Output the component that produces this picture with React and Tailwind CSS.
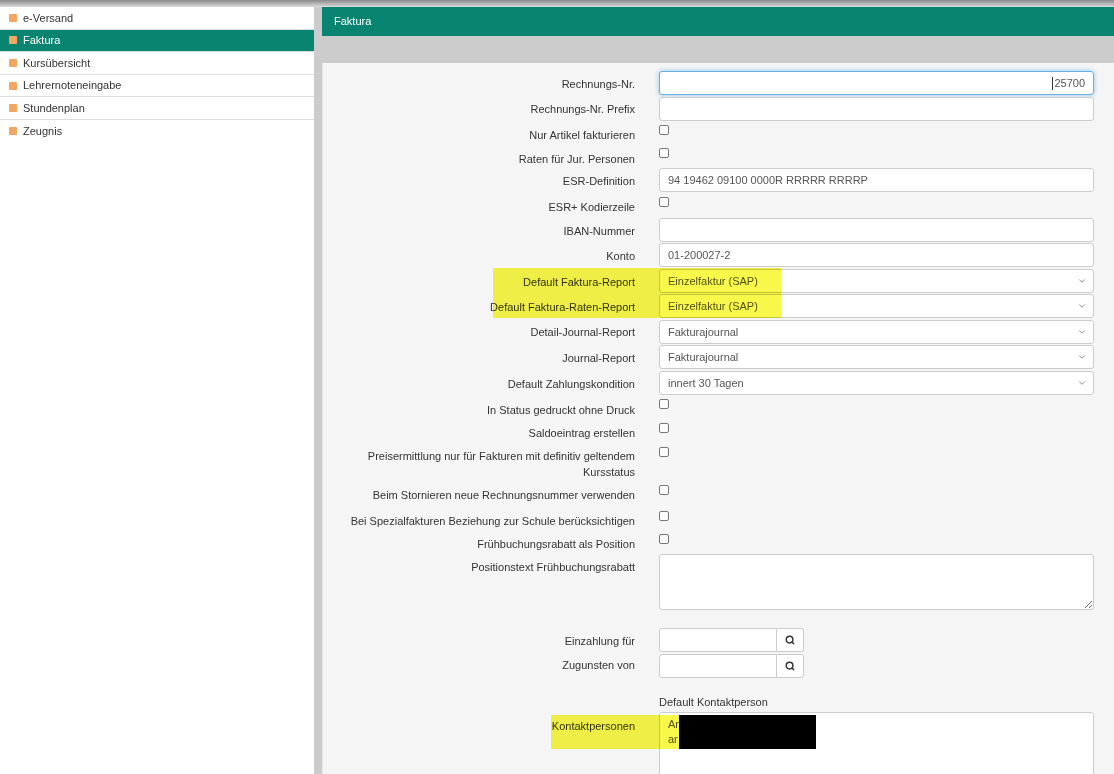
import { ChevronDown, Search } from "lucide-react";

const navItems = ["e-Versand", "Faktura", "Kursübersicht", "Lehrernoteneingabe", "Stundenplan", "Zeugnis"];

function Label({ children, className = "pt-[6px]" }) {
  return (
    <div className={`w-[336px] shrink-0 pl-[14px] pr-[24px] text-right leading-[14px] text-[#333] ${className}`}>
      {children}
    </div>
  );
}

function TextInput({ value = "", focused = false }) {
  if (focused) {
    return (
      <div className="flex h-[24px] flex-1 items-center justify-end rounded-[3px] border border-[#66afe9] bg-white px-[8px] text-[#555] shadow-[0_0_5px_rgba(102,175,233,0.7)]">
        <span className="mr-[1px] h-[13px] w-px bg-[#333]" />
        {value}
      </div>
    );
  }
  return (
    <div className="flex h-[24px] flex-1 items-center rounded-[3px] border border-[#ccc] bg-white px-[8px] text-[#555]">
      {value}
    </div>
  );
}

function SelectBox({ value }) {
  return (
    <div className="flex h-[24px] flex-1 items-center justify-between rounded-[3px] border border-[#ccc] bg-white pl-[8px] pr-[6px] text-[#555]">
      <span>{value}</span>
      <ChevronDown size={10} strokeWidth={2} className="text-[#777]" />
    </div>
  );
}

function Check({ className = "mt-[3px]" }) {
  return <div className={`h-[10px] w-[10px] rounded-[2px] border border-[#767676] bg-white ${className}`} />;
}

function LookupField() {
  return (
    <div className="flex h-[24px]">
      <div className="h-[24px] w-[118px] rounded-l-[3px] border border-[#ccc] bg-white" />
      <div className="flex h-[24px] w-[27px] items-center justify-center rounded-r-[3px] border border-l-0 border-[#ccc] bg-white">
        <Search size={10} strokeWidth={3.5} className="text-[#333]" />
      </div>
    </div>
  );
}

export default function App() {
  return (
    <div
      className="flex h-[774px] w-[1114px] flex-col overflow-hidden bg-[#ccc] text-[11px]"
      style={{ fontFamily: '"Liberation Sans", Arial, sans-serif' }}
    >
      <div className="h-[7px] shrink-0 bg-gradient-to-b from-[#8a8a8a] to-[#dcdcdc]" />
      <div className="flex flex-1">
        {/* sidebar */}
        <aside className="w-[314px] shrink-0 bg-white">
          {navItems.map((item) => {
            const active = item === "Faktura";
            return (
              <div
                key={item}
                className={`flex h-[22.6px] items-center gap-[6px] border-b border-[#ddd] pl-[9px] ${
                  active ? "bg-[#088470] text-white" : "text-[#333]"
                } ${item === "Zeugnis" ? "border-b-0" : ""}`}
              >
                <span className="h-[8px] w-[8px] rounded-[1px] bg-[#f3a660]" />
                {item}
              </div>
            );
          })}
        </aside>

        {/* main */}
        <main className="ml-[8px] flex flex-1 flex-col">
          <div className="flex h-[29px] shrink-0 items-center bg-[#088470] pl-[12px] text-white">Faktura</div>
          <div className="h-[27px] shrink-0 bg-[#ccc]" />
          <div className="relative flex-1 border-l border-[#e6e6e6] bg-[#f5f5f5] pr-[20px] pt-[8px]">
            <div className="flex h-[26px] items-start">
              <Label>Rechnungs-Nr.</Label>
              <TextInput value="25700" focused />
            </div>
            <div className="flex h-[24px] items-start">
              <Label className="pt-[5px]">Rechnungs-Nr. Prefix</Label>
              <TextInput />
            </div>
            <div className="flex h-[24px] items-start">
              <Label className="pt-[7px]">Nur Artikel fakturieren</Label>
              <Check className="mt-[4px]" />
            </div>
            <div className="flex h-[23px] items-start">
              <Label className="pt-[7px]">Raten für Jur. Personen</Label>
              <Check />
            </div>
            <div className="flex h-[26px] items-start">
              <Label>ESR-Definition</Label>
              <TextInput value="94 19462 09100 0000R RRRRR RRRRP" />
            </div>
            <div className="flex h-[24px] items-start">
              <Label>ESR+ Kodierzeile</Label>
              <Check />
            </div>
            <div className="flex h-[25px] items-start">
              <Label>IBAN-Nummer</Label>
              <TextInput />
            </div>
            <div className="flex h-[26px] items-start">
              <Label>Konto</Label>
              <TextInput value="01-200027-2" />
            </div>
            <div className="flex h-[25px] items-start">
              <Label>Default Faktura-Report</Label>
              <SelectBox value="Einzelfaktur (SAP)" />
            </div>
            <div className="flex h-[26px] items-start">
              <Label>Default Faktura-Raten-Report</Label>
              <SelectBox value="Einzelfaktur (SAP)" />
            </div>
            <div className="flex h-[25px] items-start">
              <Label className="pt-[5px]">Detail-Journal-Report</Label>
              <SelectBox value="Fakturajournal" />
            </div>
            <div className="flex h-[26px] items-start">
              <Label>Journal-Report</Label>
              <SelectBox value="Fakturajournal" />
            </div>
            <div className="flex h-[24px] items-start">
              <Label>Default Zahlungskondition</Label>
              <SelectBox value="innert 30 Tagen" />
            </div>
            <div className="flex h-[25px] items-start">
              <Label className="pt-[8px]">In Status gedruckt ohne Druck</Label>
              <Check className="mt-[4px]" />
            </div>
            <div className="flex h-[24px] items-start">
              <Label>Saldoeintrag erstellen</Label>
              <Check />
            </div>
            <div className="flex h-[38px] items-start">
              <Label className="pt-[4px] leading-[16px]">
                <span className="leading-[16px]">Preisermittlung nur für Fakturen mit definitiv geltendem Kursstatus</span>
              </Label>
              <Check />
            </div>
            <div className="flex h-[26px] items-start">
              <Label>Beim Stornieren neue Rechnungsnummer verwenden</Label>
              <Check />
            </div>
            <div className="flex h-[23px] items-start">
              <Label>Bei Spezialfakturen Beziehung zur Schule berücksichtigen</Label>
              <Check />
            </div>
            <div className="flex h-[23px] items-start">
              <Label>Frühbuchungsrabatt als Position</Label>
              <Check />
            </div>
            <div className="flex h-[74px] items-start">
              <Label>Positionstext Frühbuchungsrabatt</Label>
              <textarea
                readOnly
                className="h-[56px] flex-1 rounded-[3px] border border-[#ccc] bg-white outline-none"
              />
            </div>
            <div className="flex h-[26px] items-start">
              <Label>Einzahlung für</Label>
              <LookupField />
            </div>
            <div className="flex h-[41px] items-start">
              <Label className="pt-[4px]">Zugunsten von</Label>
              <LookupField />
            </div>
            <div className="flex h-[17px] items-start">
              <Label />
              <div className="leading-[14px] text-[#333]">Default Kontaktperson</div>
            </div>
            <div className="flex h-[90px] items-start">
              <Label className="pt-[7px]">Kontaktpersonen</Label>
              <div className="h-[90px] flex-1 rounded-[3px] border border-[#ccc] bg-white px-[8px] pt-[4px] leading-[15px] text-[#555]">
                <div>Ar</div>
                <div>ar</div>
              </div>
            </div>

            {/* annotation highlights */}
            <div className="pointer-events-none absolute left-[170px] top-[205px] h-[50px] w-[288px] bg-[#f8f84a] mix-blend-multiply" />
            <div className="pointer-events-none absolute left-[228px] top-[652px] h-[34px] w-[258px] bg-[#f8f84a] mix-blend-multiply" />
            <div className="absolute left-[356px] top-[652px] h-[34px] w-[137px] bg-black" />
          </div>
        </main>
      </div>
    </div>
  );
}
